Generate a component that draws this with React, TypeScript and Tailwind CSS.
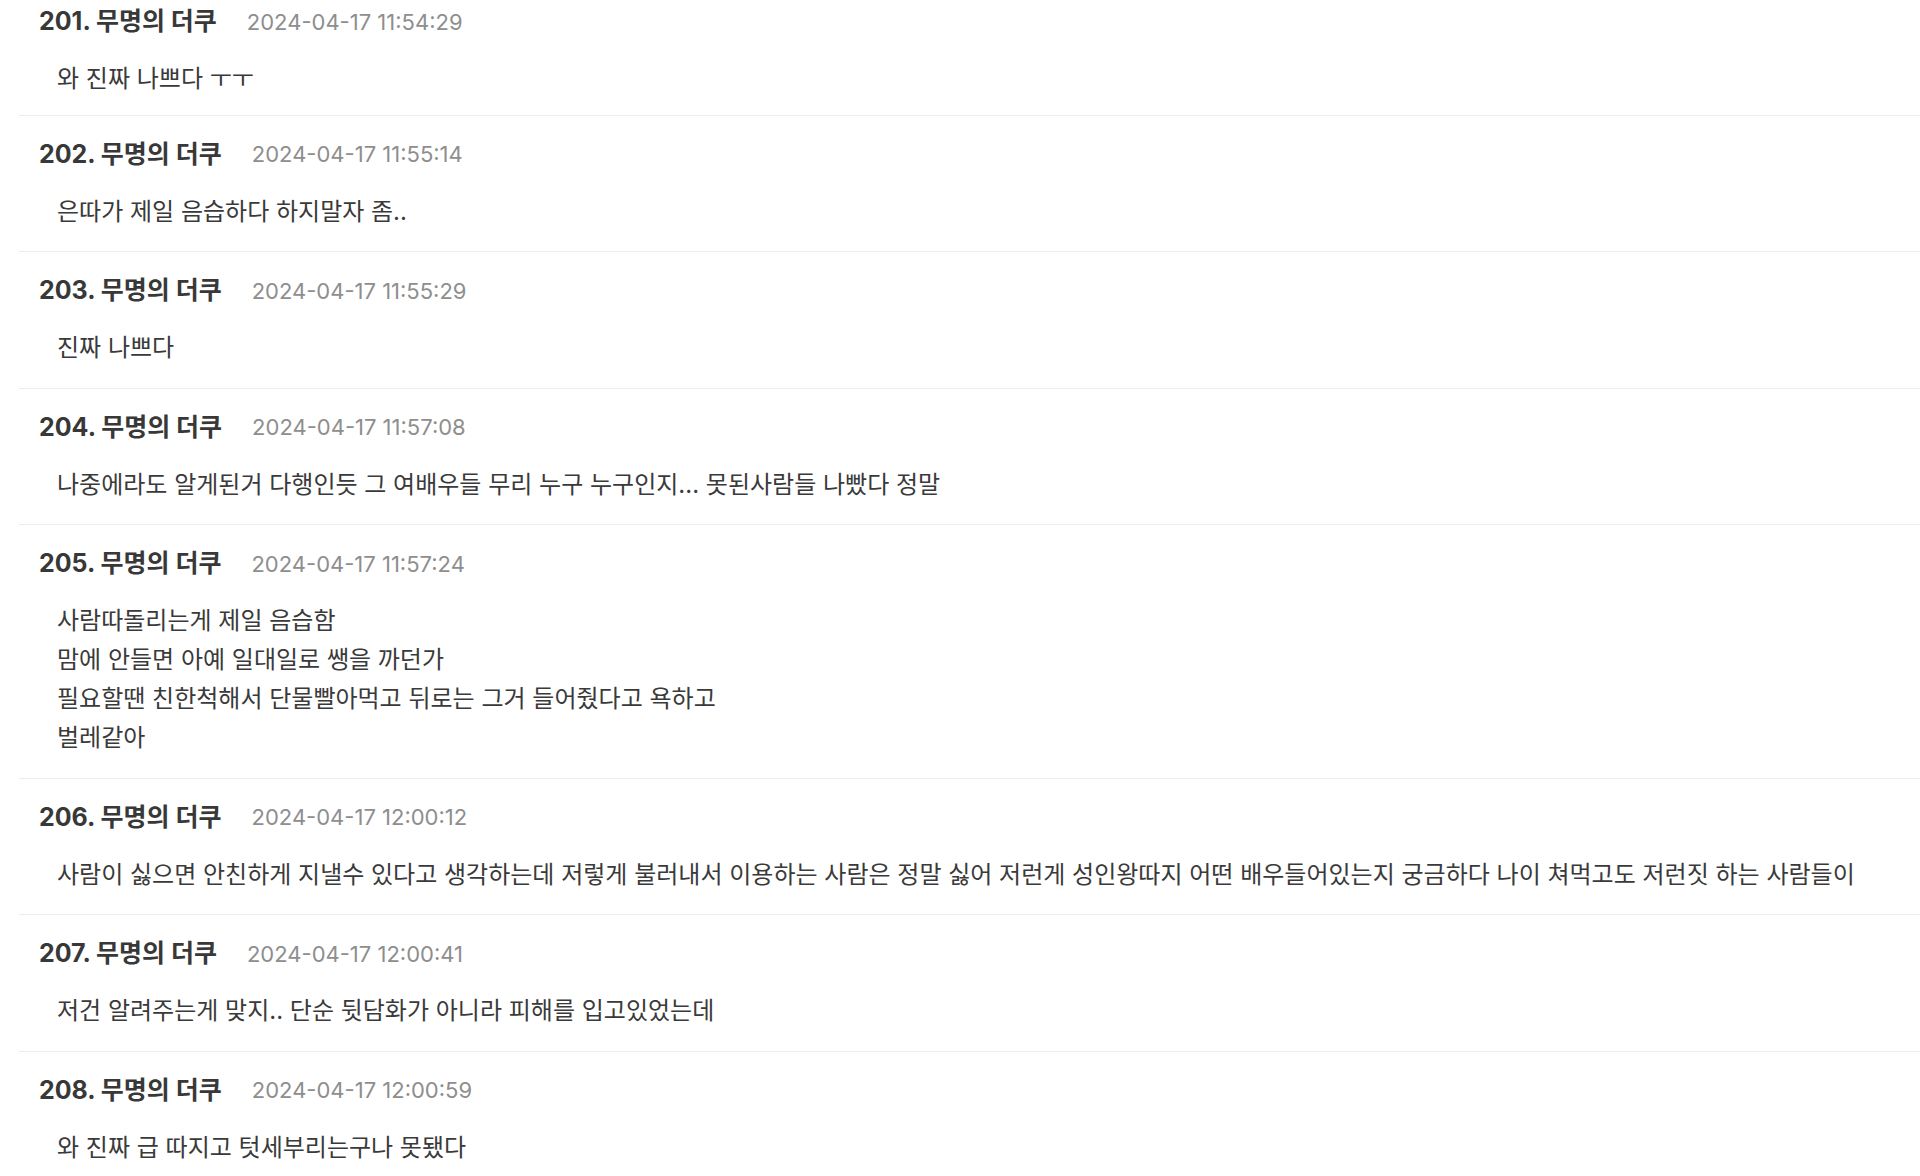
const comments = [
  { no: 201, time: "2024-04-17 11:54:29", lines: ["와 진짜 나쁘다 ㅜㅜ"] },
  { no: 202, time: "2024-04-17 11:55:14", lines: ["은따가 제일 음습하다 하지말자 좀.."] },
  { no: 203, time: "2024-04-17 11:55:29", lines: ["진짜 나쁘다"] },
  {
    no: 204,
    time: "2024-04-17 11:57:08",
    lines: ["나중에라도 알게된거 다행인듯 그 여배우들 무리 누구 누구인지... 못된사람들 나빴다 정말"],
  },
  {
    no: 205,
    time: "2024-04-17 11:57:24",
    lines: [
      "사람따돌리는게 제일 음습함",
      "맘에 안들면 아예 일대일로 쌩을 까던가",
      "필요할땐 친한척해서 단물빨아먹고 뒤로는 그거 들어줬다고 욕하고",
      "벌레같아",
    ],
  },
  {
    no: 206,
    time: "2024-04-17 12:00:12",
    lines: [
      "사람이 싫으면 안친하게 지낼수 있다고 생각하는데 저렇게 불러내서 이용하는 사람은 정말 싫어 저런게 성인왕따지 어떤 배우들어있는지 궁금하다 나이 쳐먹고도 저런짓 하는 사람들이",
    ],
  },
  { no: 207, time: "2024-04-17 12:00:41", lines: ["저건 알려주는게 맞지.. 단순 뒷담화가 아니라 피해를 입고있었는데"] },
  { no: 208, time: "2024-04-17 12:00:59", lines: ["와 진짜 급 따지고 텃세부리는구나 못됐다"] },
];

export default function App() {
  return (
    <div
      className="h-[1176px] w-[1920px] overflow-hidden bg-white"
      style={{ fontFamily: '"Inter", "Noto Sans CJK KR", sans-serif' }}
    >
      {/* list is scrolled, first comment is cut off at the top */}
      <div className="-mt-[17px] pl-[19px]">
        {comments.map((c, idx) => (
          <div
            key={c.no}
            className={
              idx === 0
                ? "border-b border-[#ececec] pt-[24px] pb-[16.5px]"
                : "border-b border-[#ececec] pt-[24px] pb-[20.5px]"
            }
          >
            {/* header */}
            <div className="flex h-[30px] items-center pl-[20px]">
              <span className="text-[25px] font-bold text-[#383838]">
                {c.no}. 무명의 더쿠
              </span>
              <span className="ml-[30px] text-[22px] text-[#8e8e8e]">{c.time}</span>
            </div>
            {/* body */}
            <div className="mt-[22px] pl-[38px] text-[24px] leading-[39px] text-[#3a3a3a]">
              {c.lines.map((l, i) => (
                <div key={i} className="whitespace-nowrap">
                  {l}
                </div>
              ))}
            </div>
          </div>
        ))}
      </div>
    </div>
  );
}
